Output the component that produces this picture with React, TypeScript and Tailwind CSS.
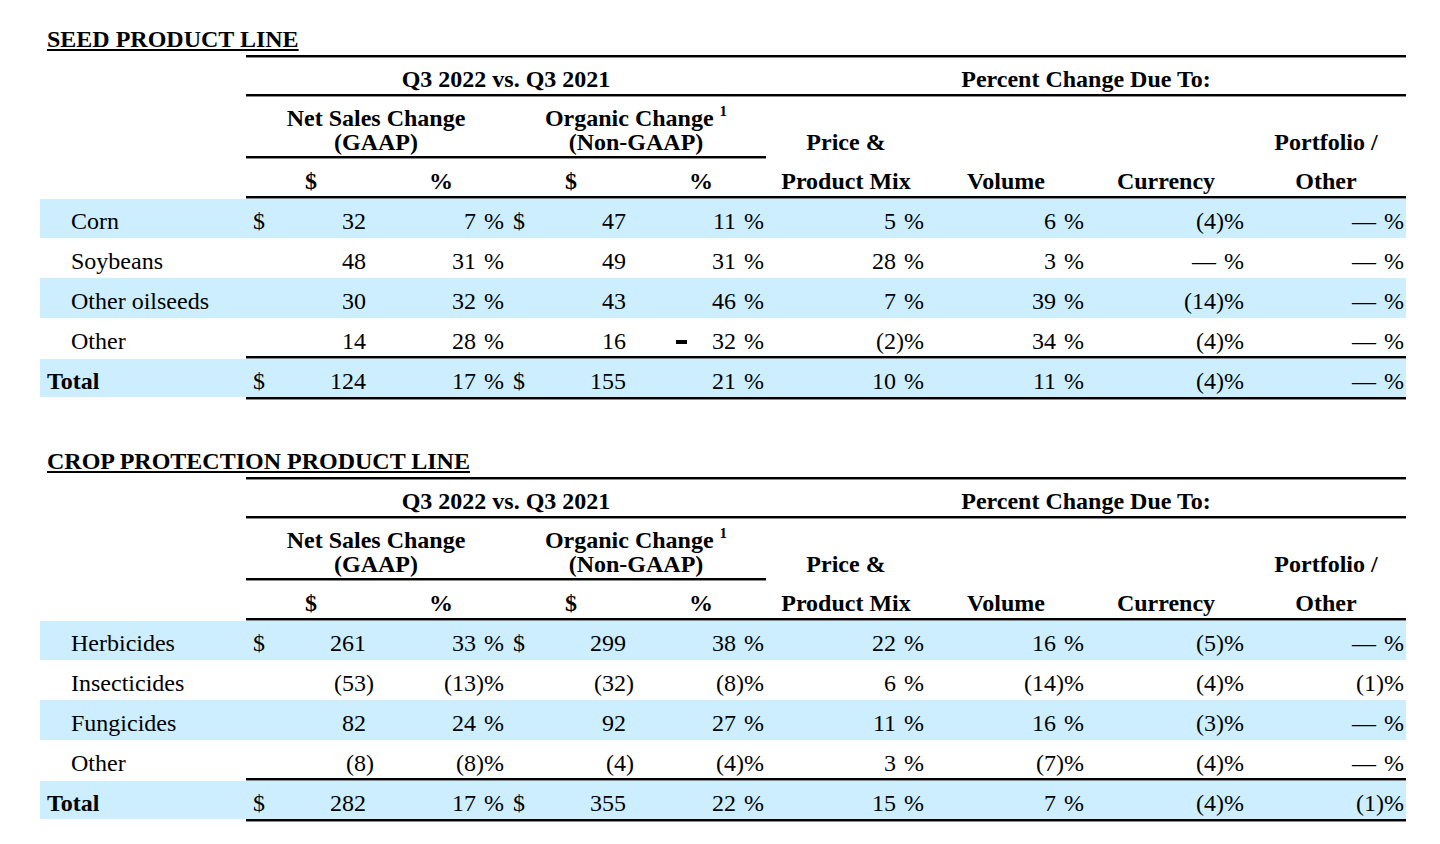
import React from "react";

type RowData = {
  label: string;
  dollar?: boolean;
  total?: boolean;
  blue?: boolean;
  mark?: boolean;
  v: [string, string, string, string, string, string, string, string];
};

const COLS =
  "grid grid-cols-[206px_130px_130px_130px_130px_160px_160px_160px_160px]";
const HCOLS =
  "grid grid-cols-[130px_130px_130px_130px_160px_160px_160px_160px]";

const seed: RowData[] = [
  { label: "Corn", dollar: true, blue: true, v: ["32", "7", "47", "11", "5", "6", "(4)", "—"] },
  { label: "Soybeans", v: ["48", "31", "49", "31", "28", "3", "—", "—"] },
  { label: "Other oilseeds", blue: true, v: ["30", "32", "43", "46", "7", "39", "(14)", "—"] },
  { label: "Other", mark: true, v: ["14", "28", "16", "32", "(2)", "34", "(4)", "—"] },
  { label: "Total", total: true, dollar: true, blue: true, v: ["124", "17", "155", "21", "10", "11", "(4)", "—"] },
];

const crop: RowData[] = [
  { label: "Herbicides", dollar: true, blue: true, v: ["261", "33", "299", "38", "22", "16", "(5)", "—"] },
  { label: "Insecticides", v: ["(53)", "(13)", "(32)", "(8)", "6", "(14)", "(4)", "(1)"] },
  { label: "Fungicides", blue: true, v: ["82", "24", "92", "27", "11", "16", "(3)", "—"] },
  { label: "Other", v: ["(8)", "(8)", "(4)", "(4)", "3", "(7)", "(4)", "—"] },
  { label: "Total", total: true, dollar: true, blue: true, v: ["282", "17", "355", "22", "15", "7", "(4)", "(1)"] },
];

function Rule() {
  return <div className="h-[3px] border-t-2 border-t-black border-b border-b-[#8a8a8a]" />;
}

function Inv() {
  return <span className="invisible">)</span>;
}

function Dollar({ v }: { v: string }) {
  if (v.startsWith("(")) return <span>{v}</span>;
  return (
    <span>
      {v}
      <Inv />
    </span>
  );
}

function Pct({ v }: { v: string }) {
  if (v.startsWith("(")) return <span>{v}%</span>;
  return (
    <span>
      {v}
      <Inv />%
    </span>
  );
}

function DollarCell({ v, sign }: { v: string; sign?: boolean }) {
  return (
    <div className="flex items-start justify-between pl-[7px] pr-[2px]">
      <span>{sign ? "$" : ""}</span>
      <Dollar v={v} />
    </div>
  );
}

function PctCell({ v, mark }: { v: string; mark?: boolean }) {
  return (
    <div className="flex items-start justify-end pr-[2px]">
      {mark && <span className="mr-[25px] mt-[11px] inline-block h-[4px] w-[11px] bg-black" />}
      <Pct v={v} />
    </div>
  );
}

function DataRow({ r, idx }: { r: RowData; idx: number }) {
  const h =
    r.total
      ? "h-[38px] pt-[10px]"
      : idx === 0
      ? "h-[39px] pt-[10px]"
      : idx === 3
      ? "h-[38px] pt-[11px]"
      : "h-[40px] pt-[11px]";
  return (
    <div className={`${COLS} ${h} ${r.blue ? "bg-[#cceeff]" : ""}`}>
      <div className={r.total ? "pl-[7px] font-bold" : "pl-[31px]"}>{r.label}</div>
      <DollarCell v={r.v[0]} sign={r.dollar} />
      <PctCell v={r.v[1]} />
      <DollarCell v={r.v[2]} sign={r.dollar} />
      <PctCell v={r.v[3]} mark={r.mark} />
      <PctCell v={r.v[4]} />
      <PctCell v={r.v[5]} />
      <PctCell v={r.v[6]} />
      <PctCell v={r.v[7]} />
    </div>
  );
}

function Section({ title, rows }: { title: string; rows: RowData[] }) {
  return (
    <div className="ml-[40px] w-[1366px]">
      <div className="h-[28px] pl-[7px] font-bold underline decoration-[1.5px] underline-offset-[2px]">
        {title}
      </div>
      <div className="ml-[206px] w-[1160px]">
        <Rule />
        <div className="grid h-[36px] grid-cols-[520px_640px] pt-[9px] text-center font-bold">
          <div>Q3 2022 vs. Q3 2021</div>
          <div>Percent Change Due To:</div>
        </div>
        <Rule />
        <div className={`${HCOLS} text-center font-bold`}>
          <div className="col-span-4 flex flex-col">
            <div className="grid h-[59px] grid-cols-[260px_260px] pt-[9px]">
              <div>
                <div className="h-[24px]">Net Sales Change</div>
                <div className="h-[24px]">(GAAP)</div>
              </div>
              <div>
                <div className="h-[24px]">
                  Organic Change{" "}
                  <span className="relative -top-[10px] text-[15px] leading-[0]">1</span>
                </div>
                <div className="h-[24px]">(Non-GAAP)</div>
              </div>
            </div>
            <Rule />
          </div>
          <div className="pt-[33px]">Price &amp;</div>
          <div />
          <div />
          <div className="pt-[33px]">Portfolio /</div>
          <div className="h-[37px] pt-[10px]">$</div>
          <div className="h-[37px] pt-[10px]">%</div>
          <div className="h-[37px] pt-[10px]">$</div>
          <div className="h-[37px] pt-[10px]">%</div>
          <div className="h-[37px] pt-[10px]">Product Mix</div>
          <div className="h-[37px] pt-[10px]">Volume</div>
          <div className="h-[37px] pt-[10px]">Currency</div>
          <div className="h-[37px] pt-[10px]">Other</div>
        </div>
        <Rule />
      </div>
      {rows.slice(0, 4).map((r, i) => (
        <DataRow key={r.label + i} r={r} idx={i} />
      ))}
      <div className="ml-[206px] w-[1160px]">
        <Rule />
      </div>
      <DataRow r={rows[4]} idx={4} />
      <div className="ml-[206px] w-[1160px]">
        <Rule />
      </div>
    </div>
  );
}

export default function App() {
  return (
    <div className="h-[844px] w-[1440px] overflow-hidden bg-white pt-[27px] font-['Liberation_Serif',_'Times_New_Roman',_serif] text-[24px] leading-[24px] text-black">
      <Section title="SEED PRODUCT LINE" rows={seed} />
      <div className="h-[49px]" />
      <Section title="CROP PROTECTION PRODUCT LINE" rows={crop} />
    </div>
  );
}
